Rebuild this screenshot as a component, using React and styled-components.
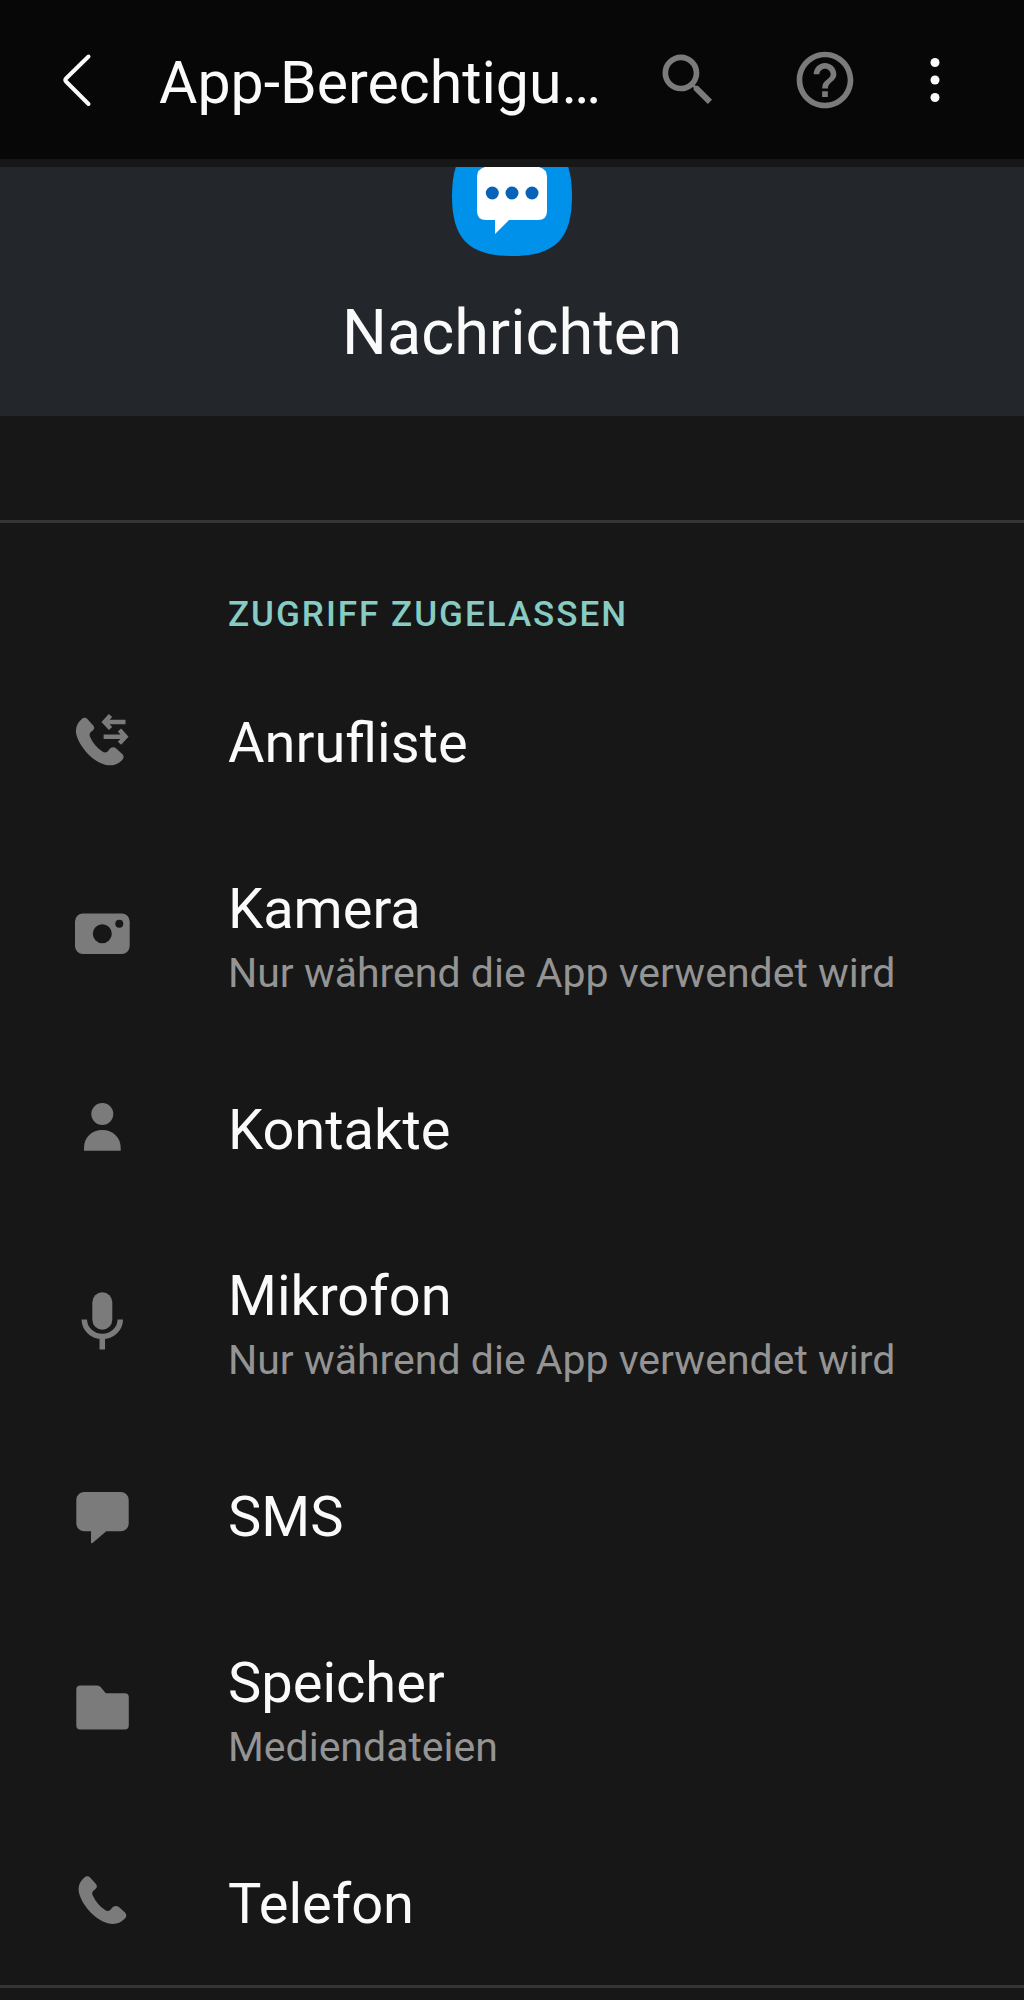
import React from 'react'
import styled, { createGlobalStyle } from 'styled-components'
import { MdHelpOutline, MdSearch } from 'react-icons/md'

const GlobalStyle = createGlobalStyle`
    :root {
        --color-bar: #070707;
        --color-page: #171717;
        --color-hero: #23272c;
        --color-line: #353535;
        --color-text: #fafafa;
        --color-muted: #949494;
        --color-icon: #7b7b7b;
        --color-accent: #87cbc3;
    }
    * {
        box-sizing: border-box;
    }
    body {
        margin: 0;
        background-color: var(--color-page);
        color: var(--color-text);
        font-family: Roboto, "Noto Sans", sans-serif;
    }
    button {
        margin: 0;
        padding: 0;
        border: 0;
        background: none;
        color: inherit;
        font: inherit;
        text-align: left;
        cursor: pointer;
    }
    svg {
        display: block;
    }
`

const Page = styled.div`
    min-height: 100vh;
`

// Top bar

const TopBar = styled.header`
    display: flex;
    align-items: center;
    height: 159px;
    margin-bottom: 8px;
    padding: 0 55px 0 42px;
    background-color: var(--color-bar);
`

const BarTitle = styled.h1`
    flex: 1;
    min-width: 0;
    margin: 0;
    padding: 6px 0 0 49px;
    overflow: hidden;
    font-size: 59px;
    font-weight: 400;
    line-height: 72px;
    white-space: nowrap;
`

const BarActions = styled.div`
    display: flex;
    align-items: center;
    gap: 42px;
`

const IconButton = styled.button`
    flex: none;
    margin-right: ${ ({ $spaced }) => $spaced ? '27px' : 0 };
    color: ${ ({ $muted }) => $muted ? 'var(--color-icon)' : 'var(--color-text)' };
`

// App summary

const Hero = styled.section`
    display: flex;
    flex-direction: column;
    align-items: center;
    padding-bottom: 47px;
    background-color: var(--color-hero);
`

const AppName = styled.h2`
    margin: 41px 0 0;
    font-size: 63px;
    font-weight: 400;
    line-height: 72px;
`

// Permissions

const PermissionGroup = styled.section`
    margin-top: 104px;
    border: 3px solid var(--color-line);
    border-width: 3px 0;
`

const GroupTitle = styled.h3`
    margin: 0;
    padding: 68px 48px 23px 228px;
    color: var(--color-accent);
    font-size: 35px;
    font-weight: 500;
    letter-spacing: 2px;
    line-height: 48px;
    text-transform: uppercase;
`

const PermissionList = styled.ul`
    margin: 0;
    padding: 0;
    list-style: none;
`

const PermissionRow = styled.button`
    display: flex;
    align-items: center;
    gap: 94px;
    width: 100%;
    padding: ${ ({ $detailed }) => $detailed ? '52px' : '48px' } 48px;
    padding-left: 70px;
`

const PermissionText = styled.span`
    display: flex;
    flex-direction: column;
    gap: 7px;
`

const PermissionName = styled.span`
    font-size: 56px;
    line-height: 66px;
`

const PermissionDetail = styled.span`
    color: var(--color-muted);
    font-size: 41px;
    line-height: 48px;
`

const Glyph = styled.svg.attrs({ viewBox: '0 0 64 64', 'aria-hidden': true })`
    flex: none;
    width: 64px;
    height: 64px;
    fill: var(--color-icon);
`

// Icons

const handset = 'M5.5 1.5C7.5-.5 10-.5 12 2l5 5.500C18.800 9.500 18.500 11.500 16.500 13C13 15.500 13 17 14.500 20C17 25.500 21 30 26 33.500C29 35.500 31 35 33 32C35.500 29 38 29 40.500 31L46 36C48.200 38 48 40.500 46 42.500C41 47.500 36 48.500 29 47C15 43 2 27 0 15C-.5 9 1.500 5 5.500 1.500Z'

const CallLogIcon = () => (
    <Glyph>
        <path d={ handset } transform="translate(6 6.700)" />
        <path d="M40.500 4.500L34.500 11l6 6.500M34.500 11h21M49.500 19l6 6.700-6 6.500M33.600 25.700H55" fill="none" stroke="var(--color-icon)" strokeWidth="4.500" />
    </Glyph>
)

const CameraIcon = () => (
    <Glyph>
        <path fillRule="evenodd" d="M13 8.500h38.700a8 8 0 0 1 8 8v24.500a8 8 0 0 1-8 8H13a8 8 0 0 1-8-8v-24.500a8 8 0 0 1 8-8zM32.300 19.300a9.500 9.500 0 1 0 0 19a9.500 9.500 0 0 0 0-19zM49.300 14.800a4 4 0 1 0 0 8a4 4 0 0 0 0-8z" />
    </Glyph>
)

const PersonIcon = () => (
    <Glyph>
        <circle cx="32.300" cy="16" r="11" />
        <path d="M14 52.700V50C14 39 22 32 32.300 32S50.700 39 50.700 50v2.700z" />
    </Glyph>
)

const MicIcon = () => (
    <Glyph>
        <rect x="22.300" y=".2" width="20" height="37.600" rx="10" />
        <path d="M14.300 27.500a18 17 0 0 0 36 0M32.300 44v13.500" fill="none" stroke="var(--color-icon)" strokeWidth="5.500" />
    </Glyph>
)

const MessageIcon = () => (
    <Glyph>
        <path d="M14.300 7h36.400a8 8 0 0 1 8 8v23.300a8 8 0 0 1-8 8H36.300L22.500 58q-1.500 1-1.500-1V46.300h-6.700a8 8 0 0 1-8-8V15a8 8 0 0 1 8-8z" />
    </Glyph>
)

const FolderIcon = () => (
    <Glyph>
        <path d="M10.300 6.500h17q2 0 3.500 1.700l5 6h19a4 4 0 0 1 4 4v28.300a4 4 0 0 1-4 4H10.300a4 4 0 0 1-4-4v-36a4 4 0 0 1 4-4z" />
    </Glyph>
)

const PhoneIcon = () => (
    <Glyph>
        <path d={ handset } transform="translate(8.700 4.300)" />
    </Glyph>
)

// upper part of the icon is scrolled under the top bar
const MessagesLogo = () => (
    <svg width="120" height="89" viewBox="0 31 120 89" aria-hidden="true">
        <path d="M60 0C103 0 120 17 120 60S103 120 60 120S0 103 0 60S17 0 60 0z" fill="#0091ea" />
        <path d="M33 31h54q8 2 8 10v34q0 9-9 9H57L43 98V84h-9q-9 0-9-9V41q0-8 8-10z" fill="#fff" />
        <g fill="#0863b8">
            <circle cx="40.300" cy="57" r="6.500" />
            <circle cx="60" cy="57" r="6.500" />
            <circle cx="80" cy="57" r="6.500" />
        </g>
    </svg>
)

const BackIcon = () => (
    <svg width="68" height="68" viewBox="0 0 68 68" aria-hidden="true">
        <path d="M46.500 10.500L24 32.500q-1.500 1.500 0 3L46.500 58" fill="none" stroke="currentColor" strokeWidth="4" strokeLinecap="round" />
    </svg>
)

const MoreIcon = () => (
    <svg width="68" height="68" viewBox="0 0 68 68" fill="currentColor" aria-hidden="true">
        <circle cx="34" cy="16.500" r="4.500" />
        <circle cx="34" cy="34" r="4.500" />
        <circle cx="34" cy="51.500" r="4.500" />
    </svg>
)

const permissions = [
    { name: 'Anrufliste', Icon: CallLogIcon },
    { name: 'Kamera', detail: 'Nur während die App verwendet wird', Icon: CameraIcon },
    { name: 'Kontakte', Icon: PersonIcon },
    { name: 'Mikrofon', detail: 'Nur während die App verwendet wird', Icon: MicIcon },
    { name: 'SMS', Icon: MessageIcon },
    { name: 'Speicher', detail: 'Mediendateien', Icon: FolderIcon },
    { name: 'Telefon', Icon: PhoneIcon },
]

const Permission = ({ name, detail, Icon }) => (
    <li>
        <PermissionRow type="button" $detailed={ Boolean(detail) }>
            <Icon />
            <PermissionText>
                <PermissionName>{ name }</PermissionName>
                { detail && <PermissionDetail>{ detail }</PermissionDetail> }
            </PermissionText>
        </PermissionRow>
    </li>
)

const App = () => (
    <Page>
        <GlobalStyle />
        <TopBar>
            <IconButton type="button" aria-label="Zurück"><BackIcon /></IconButton>
            <BarTitle>App-Berechtigu…</BarTitle>
            <BarActions>
                <IconButton type="button" aria-label="Suchen" $muted $spaced><MdSearch size={ 68 } /></IconButton>
                <IconButton type="button" aria-label="Hilfe" $muted><MdHelpOutline size={ 68 } /></IconButton>
                <IconButton type="button" aria-label="Weitere Optionen"><MoreIcon /></IconButton>
            </BarActions>
        </TopBar>
        <main>
            <Hero>
                <MessagesLogo />
                <AppName>Nachrichten</AppName>
            </Hero>
            <PermissionGroup>
                <GroupTitle>Zugriff zugelassen</GroupTitle>
                <PermissionList>
                    { permissions.map(permission => <Permission key={ permission.name } { ...permission } />) }
                </PermissionList>
            </PermissionGroup>
        </main>
    </Page>
)

export default App
